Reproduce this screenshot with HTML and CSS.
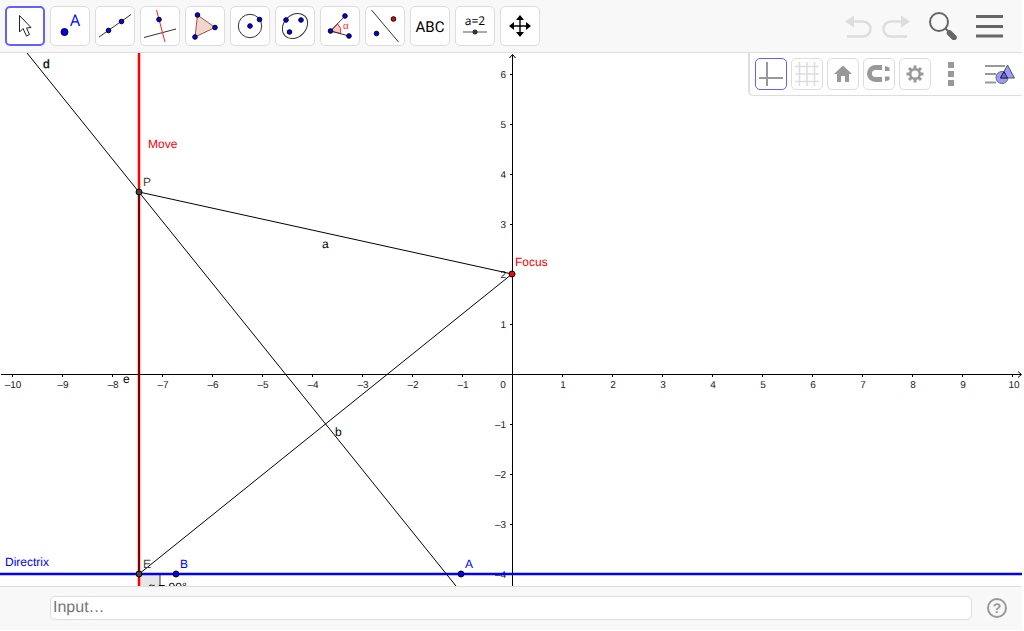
FILE: index.html
```html
<!DOCTYPE html>
<html lang="en">
<head>
  <meta charset="UTF-8" />
  <meta name="viewport" content="width=device-width, initial-scale=1.0"/>
  <title>Parabola</title>
  <link rel="stylesheet" href="styles.css">
</head>
<body>
  <div class="app">
    <!-- Toolbar -->
    <header class="toolbar">
      <div class="tools">
        <button class="tool selected" aria-label="Move">
          <svg viewBox="0 0 36 36"><path d="M12.5 7.5V24L16 20.5L19.5 28L22.5 26.5L19.5 20L24 19.5Z" fill="#fff" stroke="#222"/></svg>
        </button>
        <button class="tool" aria-label="Point">
          <svg viewBox="0 0 36 36"><circle class="pt" cx="12.5" cy="24" r="3.5"/><text class="point-name" x="18" y="18">A</text></svg>
        </button>
        <button class="tool" aria-label="Line">
          <svg viewBox="0 0 36 36"><path class="ln" d="M2 29L34 6.5"/><circle class="pt" cx="11.5" cy="22.5" r="2.3"/><circle class="pt" cx="24.5" cy="13.5" r="2.3"/></svg>
        </button>
        <button class="tool" aria-label="Perpendicular Line">
          <svg viewBox="0 0 36 36"><path class="ln" d="M2 29.5L34 21"/><path class="ln red" d="M14.5 2L23 34"/><circle class="pt" cx="17" cy="11.5" r="2.3"/></svg>
        </button>
        <button class="tool" aria-label="Polygon">
          <svg viewBox="0 0 36 36"><path d="M10.5 7L28 19.5L8 29Z" fill="#f0d6ce" stroke="#a0523d"/><circle class="pt" cx="10.5" cy="7" r="2.3"/><circle class="pt" cx="28" cy="19.5" r="2.3"/><circle class="pt" cx="8" cy="29" r="2.3"/></svg>
        </button>
        <button class="tool" aria-label="Circle with Center through Point">
          <svg viewBox="0 0 36 36"><circle class="ln" cx="18" cy="18" r="11.7"/><circle class="pt" cx="18" cy="18" r="2.3"/><circle class="pt" cx="27.5" cy="11.5" r="2.3"/></svg>
        </button>
        <button class="tool" aria-label="Ellipse">
          <svg viewBox="0 0 36 36"><ellipse class="ln" cx="18" cy="18" rx="14" ry="11" transform="rotate(-45 18 18)"/><circle class="pt" cx="9" cy="12" r="2.3"/><circle class="pt" cx="24" cy="12" r="2.3"/><circle class="pt" cx="12.5" cy="24" r="2.3"/></svg>
        </button>
        <button class="tool" aria-label="Angle">
          <svg viewBox="0 0 36 36"><path d="M8.5 23L15.7 16A10.5 10.5 0 0 1 18.8 25.5Z" fill="#fbc8c8" stroke="#e33"/><path class="ln" d="M23 8L8.5 23L27 28"/><circle class="pt" cx="8.5" cy="23" r="2.3"/><circle class="pt" cx="23" cy="8" r="2.3"/><circle class="pt" cx="27" cy="28" r="2.3"/><text class="alpha" x="21" y="21">α</text></svg>
        </button>
        <button class="tool" aria-label="Reflect about Line">
          <svg viewBox="0 0 36 36"><path class="ln" d="M4.5 2L31.5 34"/><circle class="pt red-pt" cx="26.5" cy="11" r="2.3"/><circle class="pt" cx="9.5" cy="25.5" r="2.3"/></svg>
        </button>
        <button class="tool" aria-label="Text">
          <svg viewBox="0 0 36 36"><text class="abc" x="18" y="23.5">ABC</text></svg>
        </button>
        <button class="tool" aria-label="Slider">
          <svg viewBox="0 0 36 36"><text class="slider-text" x="18" y="17">a=2</text><path d="M6 24H30" stroke="#555"/><circle cx="18" cy="24" r="2.5" fill="#333"/></svg>
        </button>
        <button class="tool" aria-label="Move Graphics View">
          <svg viewBox="0 0 36 36"><path d="M18 11V25M11 18H25" stroke="#000" stroke-width="1.4"/><path d="M18 7L22 12H14ZM18 29L22 24H14ZM7 18L12 14V22ZM29 18L24 14V22Z"/></svg>
        </button>
      </div>
      <div class="actions">
        <button class="icon-btn" aria-label="Undo">
          <svg width="28" height="24" viewBox="0 0 28 24"><path d="M7 7.5H18A7.5 7.5 0 0 1 18 22.5H2" fill="none" stroke="#ddd" stroke-width="2.5"/><path d="M0 7.5L9 1.5V13.5Z" fill="#ddd"/></svg>
        </button>
        <button class="icon-btn redo" aria-label="Redo">
          <svg width="28" height="24" viewBox="0 0 28 24"><path d="M20 7.5H9A7.5 7.5 0 0 0 9 22.5H25" fill="none" stroke="#ddd" stroke-width="2.5"/><path d="M28 7.5L19 1.5V13.5Z" fill="#ddd"/></svg>
        </button>
        <button class="icon-btn search" aria-label="Search">
          <svg width="28" height="28" viewBox="0 0 28 28"><circle cx="10" cy="10" r="9" fill="none" stroke="#666" stroke-width="2"/><path d="M16.5 16.5L20 20" stroke="#666" stroke-width="2"/><path d="M20.5 21L25 25.5" stroke="#666" stroke-width="5.5" stroke-linecap="round"/></svg>
        </button>
        <button class="icon-btn" aria-label="Menu">
          <svg width="27" height="24" viewBox="0 0 27 24"><path d="M0 2.5H27M0 12.5H27M0 22H27" stroke="#666" stroke-width="3"/></svg>
        </button>
      </div>
    </header>

    <!-- Graphics view -->
    <main class="graphics">
      <svg class="canvas" viewBox="0 53 1022 533" preserveAspectRatio="xMidYMid slice">
        <!-- Axes -->
        <g class="axis">
          <path d="M1 374.5H1021M512.5 586V55"/>
          <path d="M1018 371.5L1021.5 374.5L1018 377.5M509.5 58L512.5 54.5L515.5 58"/>
          <path d="M12.5 374V377M62.5 374V377M112.5 374V377M162.5 374V377M212.5 374V377M262.5 374V377M312.5 374V377M362.5 374V377M412.5 374V377M462.5 374V377M562.5 374V377M612.5 374V377M662.5 374V377M712.5 374V377M762.5 374V377M812.5 374V377M862.5 374V377M912.5 374V377M962.5 374V377M1012.5 374V377"/>
          <path d="M510 74.5H513M510 124.5H513M510 174.5H513M510 224.5H513M510 274.5H513M510 324.5H513M510 424.5H513M510 474.5H513M510 524.5H513M510 574.5H513"/>
        </g>
        <g class="numbers-x">
          <text x="13" y="388">–10</text>
          <text x="63" y="388">–9</text>
          <text x="113" y="388">–8</text>
          <text x="163" y="388">–7</text>
          <text x="213" y="388">–6</text>
          <text x="263" y="388">–5</text>
          <text x="313" y="388">–4</text>
          <text x="363" y="388">–3</text>
          <text x="413" y="388">–2</text>
          <text x="463" y="388">–1</text>
          <text x="503" y="388">0</text>
          <text x="563" y="388">1</text>
          <text x="613" y="388">2</text>
          <text x="663" y="388">3</text>
          <text x="713" y="388">4</text>
          <text x="763" y="388">5</text>
          <text x="813" y="388">6</text>
          <text x="863" y="388">7</text>
          <text x="913" y="388">8</text>
          <text x="963" y="388">9</text>
          <text x="1014" y="388">10</text>
        </g>
        <g class="numbers-y">
          <text x="506" y="78">6</text>
          <text x="506" y="128">5</text>
          <text x="506" y="178">4</text>
          <text x="506" y="228">3</text>
          <text x="506" y="278">2</text>
          <text x="506" y="328">1</text>
          <text x="506" y="428">–1</text>
          <text x="506" y="478">–2</text>
          <text x="506" y="528">–3</text>
          <text x="506" y="578">–4</text>
        </g>

        <!-- Right angle at E -->
        <rect x="139" y="574" width="21" height="21" fill="#e6e6e6" stroke="#333"/>
        <text class="label" x="148" y="591">α = 90°</text>

        <!-- Lines -->
        <path d="M139 53V586" stroke="#f00" stroke-opacity="0.25" stroke-width="4"/>
        <path d="M139 53V586" stroke="#f00" stroke-width="2"/>
        <path d="M139 192V574" stroke="#800000" stroke-width="2"/>
        <path d="M0 574H1022" stroke="#00f" stroke-opacity="0.25" stroke-width="4"/>
        <path d="M0 574H1022" stroke="#00f" stroke-width="2"/>
        <path class="thin" d="M27 53L456 586"/>
        <path class="thin" d="M139 192L512 274L139 574"/>

        <!-- Points -->
        <g class="points">
          <circle cx="139" cy="192" r="3" fill="#444"/>
          <circle cx="139" cy="574" r="3" fill="#444"/>
          <circle cx="176" cy="574" r="3" fill="#00f"/>
          <circle cx="461" cy="574" r="3" fill="#00f"/>
          <circle cx="512" cy="274" r="3" fill="#f00"/>
        </g>

        <!-- Labels -->
        <text class="label strong" x="43" y="68">d</text>
        <text class="label" x="322" y="248">a</text>
        <text class="label" x="335" y="436">b</text>
        <text class="label" x="123" y="383">e</text>
        <text class="label red-label" x="148" y="148">Move</text>
        <text class="label red-label" x="515" y="266">Focus</text>
        <text class="label gray-label" x="143" y="186">P</text>
        <text class="label gray-label" x="143" y="568">E</text>
        <text class="label blue-label" x="180" y="568">B</text>
        <text class="label blue-label" x="465" y="568">A</text>
        <text class="label blue-label" x="5" y="566">Directrix</text>
      </svg>

      <!-- Style bar -->
      <div class="stylebar">
        <button class="style-btn selected" aria-label="Show axes">
          <svg viewBox="0 0 30 30"><path d="M11 3V27M3 19H27" stroke="#999" stroke-width="2"/></svg>
        </button>
        <button class="style-btn" aria-label="Show grid">
          <svg viewBox="0 0 30 30"><path d="M7.5 3V27M15 3V27M22.5 3V27M3 7.5H27M3 15H27M3 22.5H27" stroke="#ddd" stroke-width="1.5"/></svg>
        </button>
        <button class="style-btn" aria-label="Standard view">
          <svg viewBox="0 0 30 30"><path d="M15 6.5L24 15H21V23H17V17H13V23H9V15H6Z" fill="#999"/></svg>
        </button>
        <button class="style-btn" aria-label="Point capturing">
          <svg viewBox="0 0 30 30"><path d="M18 8.5H11.5A6 6 0 0 0 11.5 20.5H18" fill="none" stroke="#999" stroke-width="5"/><path d="M21 7L25.5 8.5V12H21ZM21 17.5H25.5V21L21 22.5Z" fill="#999"/></svg>
        </button>
        <button class="style-btn" aria-label="Settings">
          <svg viewBox="0 0 30 30"><circle cx="15" cy="15" r="4.8" fill="none" stroke="#999" stroke-width="2.6"/><path d="M15 6.5V10M15 20V23.5M6.5 15H10M20 15H23.5M9 9L11.5 11.5M18.5 18.5L21 21M21 9L18.5 11.5M11.5 18.5L9 21" stroke="#999" stroke-width="3"/></svg>
        </button>
        <button class="icon-btn dots" aria-label="More">
          <svg width="6" height="24" viewBox="0 0 6 24"><path d="M0 0H6V6H0ZM0 9H6V15H0ZM0 18H6V24H0Z" fill="#999"/></svg>
        </button>
        <button class="icon-btn" aria-label="Algebra view">
          <svg width="30" height="22" viewBox="0 0 30 22"><path d="M0 3H20M0 11H11M0 19.5H11" stroke="#999" stroke-width="2"/><circle cx="17" cy="14.5" r="6" fill="#9a9aff" stroke="#666"/><path d="M22.5 2L29.5 15H15.5Z" fill="#9a9aff" stroke="#555"/><path d="M19 8.5L22.5 15H15.5Z" fill="#66f" stroke="#222"/></svg>
        </button>
      </div>
    </main>

    <!-- Input bar -->
    <footer class="inputbar">
      <input type="text" placeholder="Input…" aria-label="Input">
      <button class="icon-btn" aria-label="Help">
        <svg width="20" height="20" viewBox="0 0 20 20"><circle cx="10" cy="10" r="9" fill="none" stroke="#999" stroke-width="2"/><text class="help-mark" x="10" y="15">?</text></svg>
      </button>
    </footer>
  </div>
</body>
</html>
```
FILE: styles.css
```css
* {
  margin: 0;
  padding: 0;
  box-sizing: border-box;
}

body {
  font-family: "Liberation Sans", Arial, sans-serif;
  background-color: #fff;
  overflow: hidden;
}

.app {
  display: flex;
  flex-direction: column;
  height: 100vh;
  padding: 0 2px 1px 0;
}

button {
  border: none;
  background: none;
  cursor: pointer;
}

svg {
  display: block;
  text-rendering: geometricPrecision;
}

/* Toolbar */
.toolbar {
  display: flex;
  justify-content: space-between;
  align-items: center;
  padding: 6px 19px 6px 5px;
  background-color: #f8f8f8;
  border-bottom: 1px solid #ddd;
}

.tools {
  display: flex;
  gap: 5px;
}

.tool,
.style-btn {
  display: flex;
  align-items: center;
  justify-content: center;
  background-color: #fff;
  border: 1px solid #ddd;
  border-radius: 5px;
}

.tool {
  width: 40px;
  height: 40px;
}

.tool.selected {
  border: 2px solid #6161ff;
}

.tool svg {
  width: 36px;
  height: 36px;
  flex: none;
}

.ln {
  fill: none;
  stroke: #333;
}

.ln.red {
  stroke: #f22;
}

.pt {
  fill: #00f;
  stroke: #000;
}

.pt.red-pt {
  fill: #f00;
}

.point-name {
  font-family: "Open Sans", sans-serif;
  font-size: 16px;
  fill: #00f;
}

.alpha {
  font-size: 10px;
  fill: #f33;
}

.abc {
  font-family: Roboto, sans-serif;
  font-size: 15px;
  text-anchor: middle;
}

.slider-text {
  font-family: "Open Sans", sans-serif;
  font-size: 12px;
  text-anchor: middle;
}

.actions {
  display: flex;
  align-items: center;
}

.icon-btn.redo {
  margin-left: 9px;
}

.icon-btn.search {
  margin: 0 19px;
}

/* Graphics view */
.graphics {
  position: relative;
  flex: 1;
  min-height: 0;
}

.canvas {
  width: 100%;
  height: 100%;
}

.axis {
  fill: none;
  stroke: #000;
}

.numbers-x,
.numbers-y {
  font-size: 10px;
  fill: #222;
}

.numbers-x {
  text-anchor: middle;
}

.numbers-y {
  text-anchor: end;
}

.thin {
  fill: none;
  stroke: #000;
}

.points {
  stroke: #000;
}

.label {
  font-size: 12px;
}

.strong {
  stroke: #000;
  stroke-width: 0.3px;
}

.red-label {
  fill: #f00;
}

.blue-label {
  fill: #00f;
}

.gray-label {
  fill: #444;
}

/* Style bar */
.stylebar {
  position: absolute;
  top: 0;
  right: 0;
  display: flex;
  align-items: center;
  gap: 4px;
  padding: 5px 7px 5px 5px;
  background-color: #fff;
  border-left: 1px solid #ddd;
  border-bottom: 1px solid #ddd;
  border-bottom-left-radius: 5px;
  box-shadow: -1px 0 1px #ddd;
}

.style-btn {
  width: 32px;
  height: 32px;
}

.style-btn.selected {
  border-color: #6161ff;
}

.style-btn svg {
  width: 30px;
  height: 30px;
  flex: none;
}

.icon-btn.dots {
  margin: 0 27px 0 13px;
}

/* Input bar */
.inputbar {
  display: flex;
  align-items: center;
  gap: 15px;
  padding: 9px 15px 10px 50px;
  background-color: #f8f8f8;
  border-top: 1px solid #ddd;
}

.inputbar input {
  flex: 1;
  height: 24px;
  padding: 0 2px;
  font-family: inherit;
  font-size: 16px;
  text-rendering: geometricPrecision;
  border: 1px solid #ddd;
  border-radius: 5px;
  outline: none;
}

.inputbar input::placeholder {
  color: #757575;
}

.help-mark {
  font-size: 14px;
  font-weight: bold;
  text-anchor: middle;
  fill: #999;
}
```
